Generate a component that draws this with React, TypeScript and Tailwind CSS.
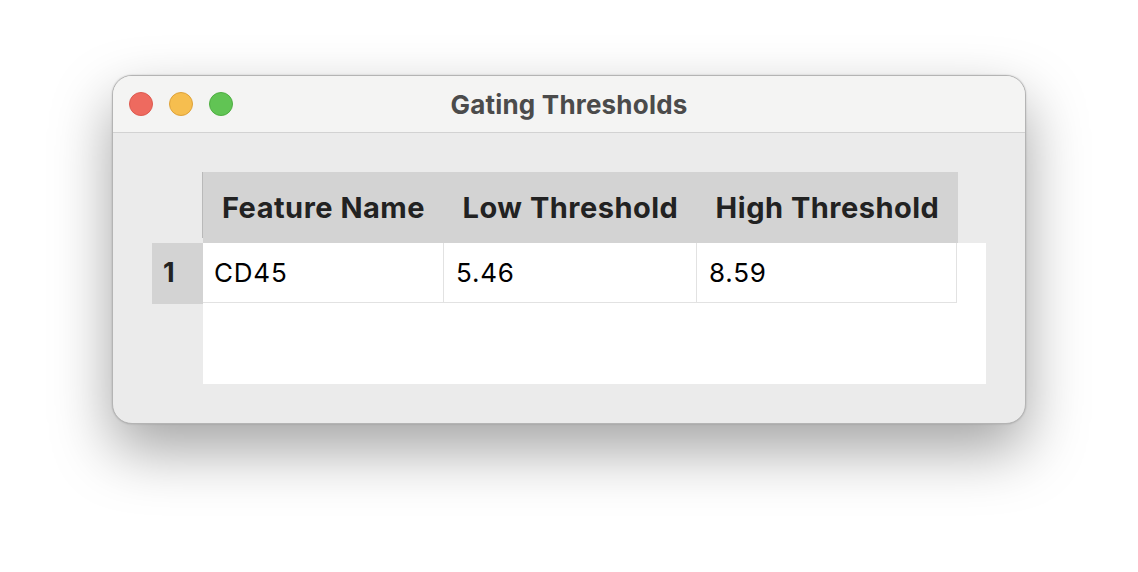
export default function App() {
  const rows = [{ name: "CD45", low: "5.46", high: "8.59" }];

  return (
    <div className="h-[572px] w-[1138px] bg-white pl-[112px] pt-[75px] font-['Inter',sans-serif]">
      <div className="h-[349px] w-[914px] overflow-hidden rounded-[20px] border border-[#b4b4b4] bg-[#ebebeb] shadow-[0_26px_60px_rgba(0,0,0,0.36),0_0_2px_rgba(0,0,0,0.2)]">
        {/* title bar */}
        <div className="relative flex h-[57px] items-center border-b border-[#d2d2d2] bg-[#f4f4f3]">
          <div className="flex items-center gap-[16px] pl-[16px]">
            <span className="h-[24px] w-[24px] rounded-full border border-[#dd5a50] bg-[#ee6a5f]" />
            <span className="h-[24px] w-[24px] rounded-full border border-[#dea23a] bg-[#f6be4f]" />
            <span className="h-[24px] w-[24px] rounded-full border border-[#4fae42] bg-[#61c454]" />
          </div>
          <div className="absolute inset-0 flex items-center justify-center text-[26px] font-bold tracking-[0.2px] text-[#4b4b4b]">
            Gating Thresholds
          </div>
        </div>

        {/* table */}
        <div className="pl-[39px] pt-[39px]">
          <div className="flex">
            <div className="w-[50px]" />
            <div className="h-[66px] w-[1px] bg-[#b9b9b9]" />
            <div className="flex h-[71px] bg-[#d3d3d3] text-[29px] font-bold tracking-[0.5px] text-[#222]">
              <div className="flex w-[241px] items-center justify-center">Feature Name</div>
              <div className="flex w-[253px] items-center justify-center">Low Threshold</div>
              <div className="flex w-[261px] items-center justify-center">High Threshold</div>
            </div>
          </div>
          <div className="flex">
            <div className="flex h-[61px] w-[51px] items-center bg-[#d3d3d3] pl-[11px] text-[27px] font-bold text-[#222]">
              1
            </div>
            <div className="h-[141px] w-[783px] bg-white">
              {rows.map((r) => (
                <div key={r.name} className="flex h-[60px] w-[754px] border-r border-b border-[#e2e2e2] text-[26px] tracking-[0.8px] text-black">
                  <div className="flex w-[241px] items-center border-r border-[#e2e2e2] pl-[11px]">{r.name}</div>
                  <div className="flex w-[253px] items-center border-r border-[#e2e2e2] pl-[12px]">{r.low}</div>
                  <div className="flex flex-1 items-center pl-[12px]">{r.high}</div>
                </div>
              ))}
            </div>
          </div>
        </div>
      </div>
    </div>
  );
}
